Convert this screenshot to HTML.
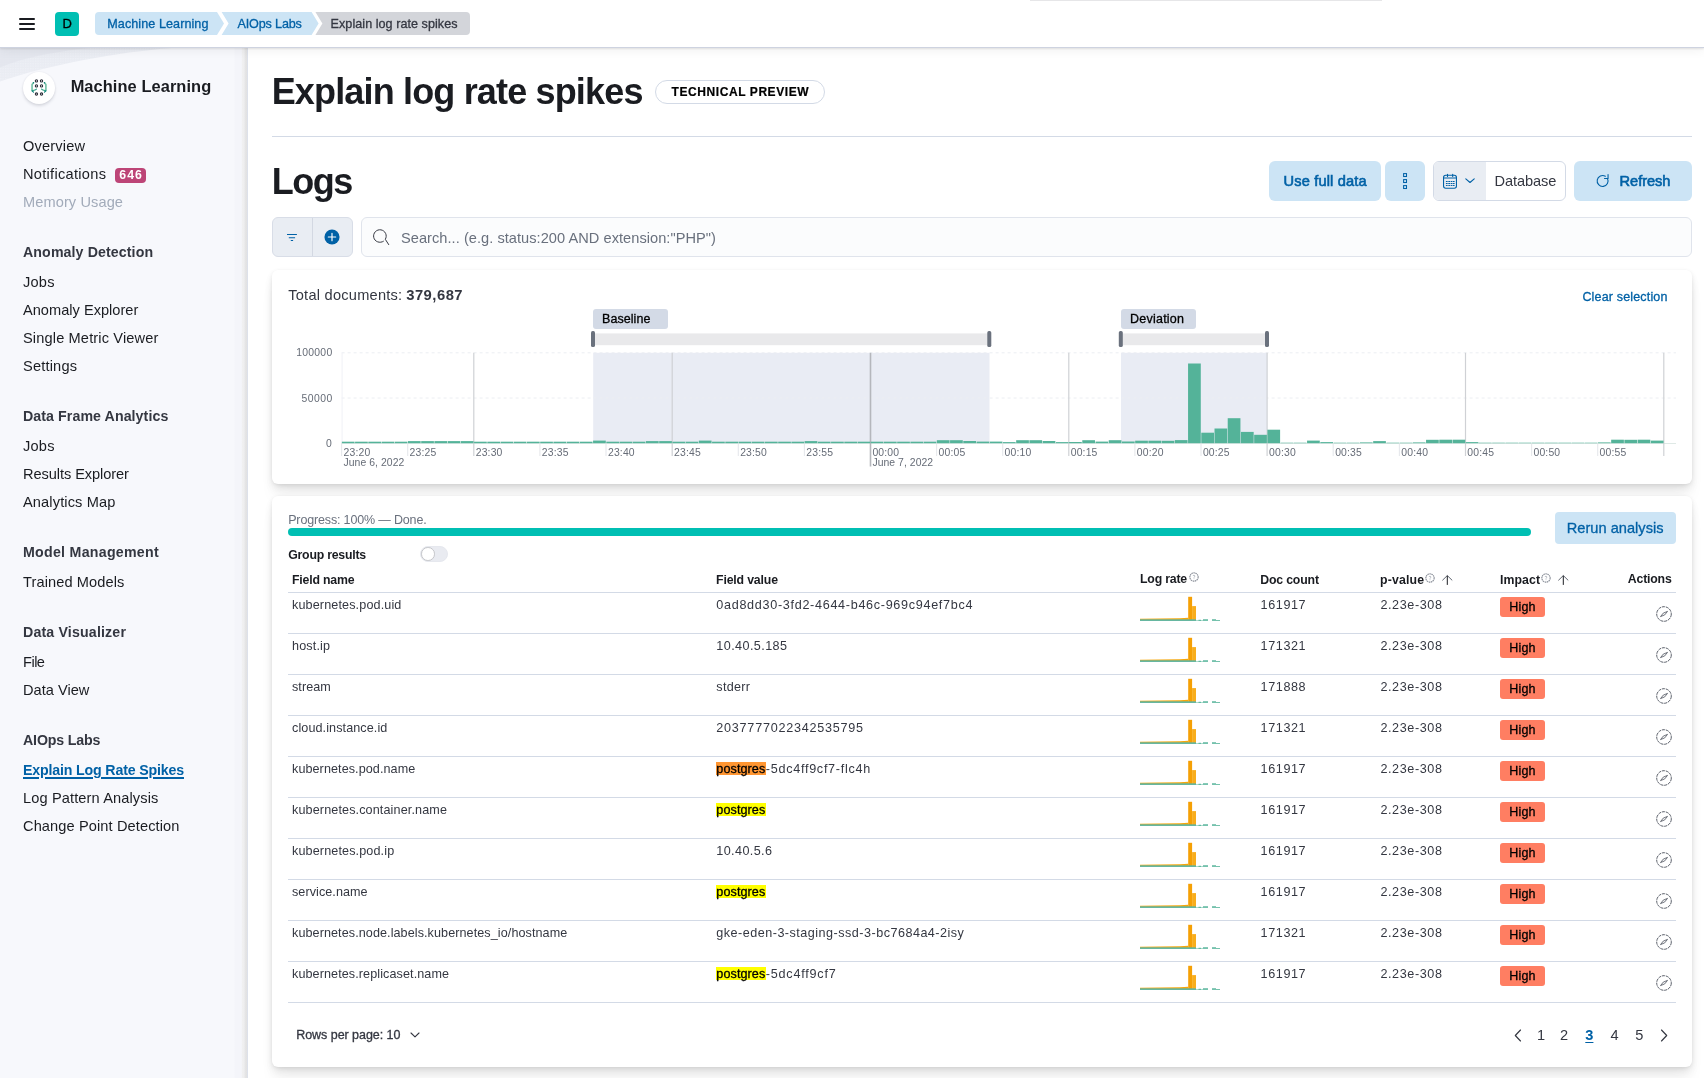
<!DOCTYPE html>
<html lang="en">
<head>
<meta charset="utf-8">
<title>Explain log rate spikes - Machine Learning</title>
<style>
*{box-sizing:border-box;margin:0;padding:0}
html,body{width:1704px;height:1078px;overflow:hidden;background:#fff}
body{font-family:"Liberation Sans",sans-serif;color:#343741;font-size:14px;position:relative;-webkit-font-smoothing:antialiased}
.abs{position:absolute;white-space:nowrap}
svg{position:absolute;overflow:visible}
#hdr{position:absolute;left:0;top:0;width:1704px;height:48px;background:#fff;border-bottom:1px solid #ced3e0;box-shadow:0 1px 2px rgba(0,0,0,.10),0 4px 9px rgba(0,0,0,.045);z-index:10}
#burger i{position:absolute;left:19px;width:16px;height:2px;background:#1a1c21;border-radius:1px}
#avatar{position:absolute;left:55px;top:12px;width:24px;height:24px;border-radius:4px;background:#00bfb3}
#side{position:absolute;left:0;top:48px;width:248px;height:1030px;background:#f7f8fc;overflow:hidden}
#sideshadow{position:absolute;left:234px;top:0;width:14px;height:1030px;background:linear-gradient(to right,rgba(244,245,250,0) 0%,#f4f5fa 8%,#f4f5fa 52%,#f0f0f1 60%,#eeeeef 72%,#e5e5e6 80%,#e2e2e3 92%,#dde1ea 94%,#dde1ea 100%)}
#main{position:absolute;left:248px;top:48px;width:1456px;height:1030px;background:#fff}
.btn{position:absolute;border-radius:6px;background:#cce4f5}
.panel{position:absolute;left:272px;width:1420px;background:#fff;border-radius:6px;box-shadow:0 1px 4px -1px rgba(0,0,0,.10),0 3px 8px -1px rgba(0,0,0,.07),0 6px 12px -1px rgba(0,0,0,.06),0 15px 15px -1px rgba(0,0,0,.04)}
.hl{position:absolute;height:13px}
.rowline{position:absolute;left:288px;width:1388px;height:1px;background:#d3dae6}
.badge{position:absolute;width:45px;height:19.5px;border-radius:3px;background:#ff7e62}
</style>
</head>
<body>
<div id="app" style="position:absolute;left:0;top:0;width:1704px;height:1078px;will-change:transform">
<div id="side">
<svg width="248" height="90" style="left:0;top:0" viewBox="0 0 248 90"><defs><linearGradient id="sw" x1="0" y1="0" x2=".6" y2="1"><stop offset="0" stop-color="#e7eaf1"/><stop offset="1" stop-color="#eceef4"/></linearGradient><pattern id="dots" width="2.500" height="2.500" patternUnits="userSpaceOnUse"><circle cx=".7" cy=".7" r=".55" fill="#f7f8fc" opacity=".75"/></pattern></defs><path d="M0 0H172C118 4 48 17 0 33.500Z" fill="url(#sw)"/><path d="M0 0H172C118 4 48 17 0 33.500Z" fill="url(#dots)"/><path d="M0 0H90C58 3 22 10 0 19.500Z" fill="#e1e4ec" opacity=".75"/></svg>
<div id="sideshadow"></div>
</div>
<div class="abs" style="left:23px;top:72px;width:32px;height:32px;border-radius:50%;background:#fff;box-shadow:0 2px 3px rgba(60,70,90,.16),0 0 2px rgba(60,70,90,.08)"></div>
<svg width="16" height="16" viewBox="0 0 16 16" style="left:31px;top:79px">
<g fill="none" stroke="#2b2d38" stroke-width="1.1"><circle cx="5.440" cy="1.930" r="1.12"/><circle cx="10.520" cy="1.930" r="1.12"/><circle cx="5.440" cy="6.940" r="1.12"/><circle cx="10.520" cy="6.940" r="1.12"/><circle cx="5.440" cy="14.960" r="1.12"/><circle cx="10.520" cy="14.960" r="1.12"/></g>
<g fill="none" stroke-linecap="round" stroke-linejoin="round"><path d="M2.500 3.800L1.050 5.600V11.600" stroke="#6fbea3" stroke-width="1.550"/><path d="M14.460 3.800L14.910 5.600V11.600" stroke="#6fbea3" stroke-width="1.550" transform="translate(-1 0)" opacity="0"/><path d="M13.460 3.800L14.910 5.600V11.600" stroke="#6fbea3" stroke-width="1.550"/>
<path d="M5.440 10.050C4.700 11.050 3.200 11.400 1.700 11.600" stroke="#3aa58d" stroke-width="1.100"/><path d="M10.520 10.050C11.260 11.050 12.760 11.400 14.260 11.600" stroke="#3aa58d" stroke-width="1.100"/>
<path d="M1.100 11.900L2.500 13.100" stroke="#017d73" stroke-width="1.150"/><path d="M14.860 11.900L13.460 13.100" stroke="#017d73" stroke-width="1.150"/>
<path d="M2.400 3.800L2.600 3.700" stroke="#017d73" stroke-width="1.200"/><path d="M13.560 3.800L13.360 3.700" stroke="#017d73" stroke-width="1.200"/></g></svg>
<span class="abs" style="left:70.63px;top:74.30px;font-size:16.4px;line-height:24px;font-weight:700;color:#1a1c21;letter-spacing:0.082px;">Machine Learning</span>
<span class="abs" style="left:23.00px;top:136.00px;font-size:14.6px;line-height:20px;color:#1a1c21;letter-spacing:0.165px;">Overview</span>
<span class="abs" style="left:23.00px;top:164.00px;font-size:14.6px;line-height:20px;color:#1a1c21;letter-spacing:0.290px;">Notifications</span>
<span class="abs" style="left:23.00px;top:192.00px;font-size:14.6px;line-height:20px;color:#a2abba;letter-spacing:0.092px;">Memory Usage</span>
<span class="abs" style="left:23.00px;top:242.00px;font-size:14.2px;line-height:20px;font-weight:700;color:#343741;letter-spacing:0.099px;">Anomaly Detection</span>
<span class="abs" style="left:23.00px;top:272.00px;font-size:14.6px;line-height:20px;color:#1a1c21;letter-spacing:0.220px;">Jobs</span>
<span class="abs" style="left:23.00px;top:300.00px;font-size:14.6px;line-height:20px;color:#1a1c21;letter-spacing:0.012px;">Anomaly Explorer</span>
<span class="abs" style="left:23.00px;top:328.00px;font-size:14.6px;line-height:20px;color:#1a1c21;letter-spacing:0.137px;">Single Metric Viewer</span>
<span class="abs" style="left:23.00px;top:356.00px;font-size:14.6px;line-height:20px;color:#1a1c21;letter-spacing:0.178px;">Settings</span>
<span class="abs" style="left:23.00px;top:406.00px;font-size:14.2px;line-height:20px;font-weight:700;color:#343741;letter-spacing:0.079px;">Data Frame Analytics</span>
<span class="abs" style="left:23.00px;top:436.00px;font-size:14.6px;line-height:20px;color:#1a1c21;letter-spacing:0.220px;">Jobs</span>
<span class="abs" style="left:23.00px;top:464.00px;font-size:14.6px;line-height:20px;color:#1a1c21;letter-spacing:-0.074px;">Results Explorer</span>
<span class="abs" style="left:23.00px;top:492.00px;font-size:14.6px;line-height:20px;color:#1a1c21;letter-spacing:0.127px;">Analytics Map</span>
<span class="abs" style="left:23.00px;top:542.00px;font-size:14.2px;line-height:20px;font-weight:700;color:#343741;letter-spacing:0.269px;">Model Management</span>
<span class="abs" style="left:23.00px;top:572.00px;font-size:14.6px;line-height:20px;color:#1a1c21;letter-spacing:0.094px;">Trained Models</span>
<span class="abs" style="left:23.00px;top:622.00px;font-size:14.2px;line-height:20px;font-weight:700;color:#343741;letter-spacing:0.160px;">Data Visualizer</span>
<span class="abs" style="left:23.00px;top:652.00px;font-size:14.6px;line-height:20px;color:#1a1c21;letter-spacing:-0.509px;">File</span>
<span class="abs" style="left:23.00px;top:680.00px;font-size:14.6px;line-height:20px;color:#1a1c21;letter-spacing:0.015px;">Data View</span>
<span class="abs" style="left:23.00px;top:730.00px;font-size:14.2px;line-height:20px;font-weight:700;color:#343741;letter-spacing:-0.156px;">AIOps Labs</span>
<span class="abs" style="left:23.00px;top:788.00px;font-size:14.6px;line-height:20px;color:#1a1c21;letter-spacing:0.121px;">Log Pattern Analysis</span>
<span class="abs" style="left:23.00px;top:816.00px;font-size:14.6px;line-height:20px;color:#1a1c21;letter-spacing:0.109px;">Change Point Detection</span>
<span class="abs" style="left:23.00px;top:760.00px;font-size:14.2px;line-height:20px;font-weight:700;color:#0061a6;letter-spacing:-0.165px;text-decoration:underline;text-decoration-thickness:1.5px;text-underline-offset:2px;">Explain Log Rate Spikes</span>
<div class="abs" style="left:115px;top:167.5px;width:31px;height:15px;border-radius:4px;background:#bd4577"></div>
<span class="abs" style="left:119.30px;top:167.60px;font-size:12.3px;line-height:15px;font-weight:700;color:#fff;letter-spacing:1.039px;">646</span>
<div id="main"></div>
<div id="hdr">
<div id="burger"><i style="top:17.750px"></i><i style="top:23px"></i><i style="top:28.300px"></i></div>
<div id="avatar"></div>
<span class="abs" style="left:62.40px;top:16.20px;font-size:13px;line-height:16px;color:#000;-webkit-text-stroke:.3px;">D</span>
<svg width="400" height="23" viewBox="0 0 400 23" style="left:95px;top:12px">
<path d="M4 0H122L129 11.5L122 23H4A4 4 0 0 1 0 19V4A4 4 0 0 1 4 0Z" fill="#cce4f5"/>
<path d="M126.600 0H216.600L223.600 11.5L216.600 23H126.600L133.600 11.500Z" fill="#cce4f5"/>
<path d="M220.400 0H371A4 4 0 0 1 375 4V19A4 4 0 0 1 371 23H220.400L227.400 11.500Z" fill="#d3d5da"/>
</svg>
<span class="abs" style="left:107.30px;top:15.60px;font-size:12.6px;line-height:16px;color:#0061a6;letter-spacing:0.069px;-webkit-text-stroke:.3px;">Machine Learning</span>
<span class="abs" style="left:237.50px;top:15.60px;font-size:12.6px;line-height:16px;color:#0061a6;letter-spacing:-0.160px;-webkit-text-stroke:.3px;">AIOps Labs</span>
<span class="abs" style="left:330.60px;top:15.60px;font-size:12.6px;line-height:16px;color:#343741;letter-spacing:0.042px;-webkit-text-stroke:.3px;">Explain log rate spikes</span>
<div class="abs" style="left:1030px;top:0;width:352px;height:1px;background:#e6e6e8"></div>
</div>
<span class="abs" style="left:271.66px;top:72.30px;font-size:36px;line-height:40px;font-weight:700;color:#1a1c21;letter-spacing:-0.835px;">Explain log rate spikes</span>
<div class="abs" style="left:655px;top:80px;width:170px;height:24px;border:1px solid #d3dae6;border-radius:12px;background:#fff"></div>
<span class="abs" style="left:671.60px;top:84.10px;font-size:12px;line-height:16px;font-weight:700;color:#000;letter-spacing:0.576px;-webkit-text-stroke:.2px;">TECHNICAL PREVIEW</span>
<div class="abs" style="left:272px;top:135.9px;width:1420px;height:1px;background:#d3dae6"></div>
<span class="abs" style="left:271.66px;top:161.60px;font-size:36px;line-height:40px;font-weight:700;color:#1a1c21;letter-spacing:-1.420px;">Logs</span>
<div class="btn" style="left:1269px;top:161px;width:112px;height:40px"></div>
<span class="abs" style="left:1283.60px;top:171.00px;font-size:14.6px;line-height:20px;-webkit-text-stroke:.6px;color:#0061a6;letter-spacing:0.154px;">Use full data</span>
<div class="btn" style="left:1385px;top:161px;width:40px;height:40px"></div>
<svg width="5" height="17" viewBox="0 0 5 17" style="left:1403px;top:173px"><g fill="none" stroke="#0061a6" stroke-width="1.05"><rect x=".6" y=".6" width="2.900" height="2.900"/><rect x=".6" y="6.600" width="2.900" height="2.900"/><rect x=".6" y="12.600" width="2.900" height="2.900"/></g></svg>
<div class="abs" style="left:1433px;top:161px;width:133px;height:40px;border:1px solid #d3dae6;border-radius:6px;background:#fff;overflow:hidden"><div style="position:absolute;left:0;top:0;width:52px;height:38px;background:#e9edf3"></div></div>
<svg width="14" height="15" viewBox="0 0 14 15" style="left:1443px;top:174px"><g fill="none" stroke="#0061a6" stroke-width="1.1"><rect x=".55" y="1.250" width="12.900" height="13" rx="2.200"/><path d="M.55 4H13.450" stroke-width="1"/><path d="M4.500 .2V2.500M9.700 .2V2.500" stroke-linecap="round"/></g><g fill="#0061a6"><rect x="2.9" y="7.0" width="1.75" height="1"/><rect x="5.3" y="7.0" width="1.75" height="1"/><rect x="7.65" y="7.0" width="1.75" height="1"/><rect x="9.85" y="7.0" width="1.75" height="1"/><rect x="2.9" y="9.0" width="1.75" height="1"/><rect x="5.3" y="9.0" width="1.75" height="1"/><rect x="7.65" y="9.0" width="1.75" height="1"/><rect x="9.85" y="9.0" width="1.75" height="1"/><rect x="2.9" y="10.95" width="1.75" height="1"/><rect x="5.3" y="10.95" width="1.75" height="1"/><rect x="7.65" y="10.95" width="1.75" height="1"/><rect x="9.85" y="10.95" width="1.75" height="1"/></g></svg>
<svg width="10" height="6" viewBox="0 0 10 6" style="left:1465px;top:178.300px"><path d="M.8 .9L5 4.500L9.200 .9" fill="none" stroke="#0061a6" stroke-width="1.15" stroke-linecap="round" stroke-linejoin="round"/></svg>
<span class="abs" style="left:1494.60px;top:171.00px;font-size:14.6px;line-height:20px;color:#343741;letter-spacing:-0.100px;">Database</span>
<div class="btn" style="left:1574px;top:161px;width:118px;height:40px"></div>
<svg width="14" height="14" viewBox="0 0 14 14" style="left:1596.300px;top:174px"><path d="M11.460 4.530A5.450 5.450 0 1 1 9.330 2.280" fill="none" stroke="#0061a6" stroke-width="1.1" stroke-linecap="round"/><path d="M12.050 .5V4.500H8.500" fill="none" stroke="#0061a6" stroke-width="1.1" stroke-linecap="round" stroke-linejoin="round"/></svg>
<span class="abs" style="left:1619.60px;top:171.00px;font-size:14.6px;line-height:20px;-webkit-text-stroke:.6px;color:#0061a6;letter-spacing:-0.054px;">Refresh</span>
<div class="abs" style="left:272px;top:217px;width:81px;height:40px;border:1px solid #d8dde7;border-radius:6px;background:#e9edf3"><div style="position:absolute;left:38.8px;top:0;width:1px;height:38px;background:#d3d8e2"></div></div>
<svg width="10" height="7" viewBox="0 0 10 7" style="left:286.900px;top:233.800px"><path d="M0 .5H9.900M1.800 3.700H8.100M3.800 6.500H6.100" fill="none" stroke="#0061a6" stroke-width="1.1"/></svg>
<svg width="16" height="16" viewBox="0 0 16 16" style="left:323.900px;top:228.750px"><circle cx="8" cy="8" r="7.550" fill="#0061a6"/><path d="M8 4.300V11.700M4.300 8H11.700" stroke="#fff" stroke-width="1.15" stroke-linecap="round"/></svg>
<div class="abs" style="left:361px;top:217px;width:1331px;height:40px;border:1px solid #e0e4ec;border-radius:6px;background:#fbfcfd"></div>
<svg width="18" height="18" viewBox="0 0 18 18" style="left:372px;top:228px"><path d="M11.400 13.300A6.300 6.300 0 1 1 13.300 11.300L16.700 16.600" fill="none" stroke="#343741" stroke-width="1" stroke-linecap="round" stroke-linejoin="round"/></svg>
<span class="abs" style="left:401.00px;top:227.80px;font-size:14.6px;line-height:20px;color:#69707d;letter-spacing:0.042px;">Search... (e.g. status:200 AND extension:"PHP")</span>
<div class="panel" style="top:270px;height:213.5px"></div>
<span class="abs" style="left:288.20px;top:284.60px;font-size:14.6px;line-height:20px;color:#343741;letter-spacing:0.242px;">Total documents:</span>
<span class="abs" style="left:406.20px;top:284.60px;font-size:14.8px;line-height:20px;font-weight:700;color:#343741;letter-spacing:0.484px;">379,687</span>
<span class="abs" style="left:1582.40px;top:289.10px;font-size:12.5px;line-height:16px;color:#0061a6;letter-spacing:0.166px;-webkit-text-stroke:.3px;">Clear selection</span>
<div class="abs" style="left:593.2px;top:309.2px;width:74.5px;height:19.5px;border-radius:3px;background:#d3dae6"></div>
<span class="abs" style="left:602.00px;top:311.00px;font-size:12.5px;line-height:16px;color:#000;letter-spacing:0.064px;-webkit-text-stroke:.3px;">Baseline</span>
<div class="abs" style="left:1121px;top:309.2px;width:74.5px;height:19.5px;border-radius:3px;background:#d3dae6"></div>
<span class="abs" style="left:1130.00px;top:311.00px;font-size:12.5px;line-height:16px;color:#000;letter-spacing:0.236px;-webkit-text-stroke:.3px;">Deviation</span>
<svg width="1420" height="214" viewBox="272 270 1420 214" style="left:272px;top:270px"><rect x="593.2" y="333.400" width="396.3" height="11.800" fill="#e9e9eb"/><rect x="593.2" y="352.8" width="396.3" height="90.4" fill="#e9ecf4"/><rect x="591.0" y="331.100" width="4" height="15.900" rx="1.6" fill="#6a717d"/><rect x="987.3" y="331.100" width="4" height="15.900" rx="1.6" fill="#6a717d"/><rect x="1121" y="333.400" width="146.2" height="11.800" fill="#e9e9eb"/><rect x="1121" y="352.8" width="146.2" height="90.4" fill="#e9ecf4"/><rect x="1118.8" y="331.100" width="4" height="15.900" rx="1.6" fill="#6a717d"/><rect x="1265.0" y="331.100" width="4" height="15.900" rx="1.6" fill="#6a717d"/><path d="M341.6 352.8H1676" stroke="#eceef2" stroke-width="1" stroke-dasharray="3 3" fill="none"/><path d="M341.6 398H1676" stroke="#eceef2" stroke-width="1" stroke-dasharray="3 3" fill="none"/><path d="M341.6 443.5H1676" stroke="#dfe9e6" stroke-width="1" fill="none"/><path d="M342.1 352.8V443.2" stroke="#f0f1f6" stroke-width="1" fill="none"/><path d="M341.6 443.2V456" stroke="#e6e8ec" stroke-width="1.1" fill="none"/><path d="M407.7 443.2V456" stroke="#e6e8ec" stroke-width="1.1" fill="none"/><path d="M473.8 352.8V456" stroke="#cfd1d5" stroke-width="1.2" fill="none"/><path d="M539.9 443.2V456" stroke="#e6e8ec" stroke-width="1.1" fill="none"/><path d="M606.0 443.2V456" stroke="#e6e8ec" stroke-width="1.1" fill="none"/><path d="M672.2 352.8V456" stroke="#cfd1d5" stroke-width="1.2" fill="none"/><path d="M738.3 443.2V456" stroke="#e6e8ec" stroke-width="1.1" fill="none"/><path d="M804.4 443.2V456" stroke="#e6e8ec" stroke-width="1.1" fill="none"/><path d="M870.5 352.8V466.5" stroke="#b5b7bc" stroke-width="1.6" fill="none"/><path d="M936.6 443.2V456" stroke="#e6e8ec" stroke-width="1.1" fill="none"/><path d="M1002.7 443.2V456" stroke="#e6e8ec" stroke-width="1.1" fill="none"/><path d="M1068.8 352.8V456" stroke="#cfd1d5" stroke-width="1.2" fill="none"/><path d="M1134.9 443.2V456" stroke="#e6e8ec" stroke-width="1.1" fill="none"/><path d="M1201.0 443.2V456" stroke="#e6e8ec" stroke-width="1.1" fill="none"/><path d="M1267.1 352.8V456" stroke="#cfd1d5" stroke-width="1.2" fill="none"/><path d="M1333.2 443.2V456" stroke="#e6e8ec" stroke-width="1.1" fill="none"/><path d="M1399.4 443.2V456" stroke="#e6e8ec" stroke-width="1.1" fill="none"/><path d="M1465.5 352.8V456" stroke="#cfd1d5" stroke-width="1.2" fill="none"/><path d="M1531.6 443.2V456" stroke="#e6e8ec" stroke-width="1.1" fill="none"/><path d="M1597.7 443.2V456" stroke="#e6e8ec" stroke-width="1.1" fill="none"/><path d="M1663.8 352.8V456" stroke="#cfd1d5" stroke-width="1.2" fill="none"/><rect x="341.85" y="441.70" width="12.72" height="1.50" fill="#54b399"/><rect x="355.07" y="441.70" width="12.72" height="1.50" fill="#54b399"/><rect x="368.29" y="441.70" width="12.72" height="1.50" fill="#54b399"/><rect x="381.52" y="441.70" width="12.72" height="1.50" fill="#54b399"/><rect x="394.74" y="441.70" width="12.72" height="1.50" fill="#54b399"/><rect x="407.96" y="441.10" width="12.72" height="2.10" fill="#54b399"/><rect x="421.18" y="441.10" width="12.72" height="2.10" fill="#54b399"/><rect x="434.40" y="441.10" width="12.72" height="2.10" fill="#54b399"/><rect x="447.63" y="441.10" width="12.72" height="2.10" fill="#54b399"/><rect x="460.85" y="441.10" width="12.72" height="2.10" fill="#54b399"/><rect x="474.07" y="441.70" width="12.72" height="1.50" fill="#54b399"/><rect x="487.29" y="441.70" width="12.72" height="1.50" fill="#54b399"/><rect x="500.51" y="441.70" width="12.72" height="1.50" fill="#54b399"/><rect x="513.74" y="441.70" width="12.72" height="1.50" fill="#54b399"/><rect x="526.96" y="441.70" width="12.72" height="1.50" fill="#54b399"/><rect x="540.18" y="441.70" width="12.72" height="1.50" fill="#54b399"/><rect x="553.40" y="441.70" width="12.72" height="1.50" fill="#54b399"/><rect x="566.62" y="441.70" width="12.72" height="1.50" fill="#54b399"/><rect x="579.85" y="441.70" width="12.72" height="1.50" fill="#54b399"/><rect x="593.07" y="440.60" width="12.72" height="2.60" fill="#54b399"/><rect x="606.29" y="441.70" width="12.72" height="1.50" fill="#54b399"/><rect x="619.51" y="441.70" width="12.72" height="1.50" fill="#54b399"/><rect x="632.73" y="441.70" width="12.72" height="1.50" fill="#54b399"/><rect x="645.96" y="441.10" width="12.72" height="2.10" fill="#54b399"/><rect x="659.18" y="441.10" width="12.72" height="2.10" fill="#54b399"/><rect x="672.40" y="441.70" width="12.72" height="1.50" fill="#54b399"/><rect x="685.62" y="441.70" width="12.72" height="1.50" fill="#54b399"/><rect x="698.84" y="440.60" width="12.72" height="2.60" fill="#54b399"/><rect x="712.07" y="441.70" width="12.72" height="1.50" fill="#54b399"/><rect x="725.29" y="441.70" width="12.72" height="1.50" fill="#54b399"/><rect x="738.51" y="441.70" width="12.72" height="1.50" fill="#54b399"/><rect x="751.73" y="441.70" width="12.72" height="1.50" fill="#54b399"/><rect x="764.95" y="441.70" width="12.72" height="1.50" fill="#54b399"/><rect x="778.18" y="441.70" width="12.72" height="1.50" fill="#54b399"/><rect x="791.40" y="441.70" width="12.72" height="1.50" fill="#54b399"/><rect x="804.62" y="441.10" width="12.72" height="2.10" fill="#54b399"/><rect x="817.84" y="441.70" width="12.72" height="1.50" fill="#54b399"/><rect x="831.06" y="441.70" width="12.72" height="1.50" fill="#54b399"/><rect x="844.29" y="441.70" width="12.72" height="1.50" fill="#54b399"/><rect x="857.51" y="441.70" width="12.72" height="1.50" fill="#54b399"/><rect x="870.73" y="441.70" width="12.72" height="1.50" fill="#54b399"/><rect x="883.95" y="441.70" width="12.72" height="1.50" fill="#54b399"/><rect x="897.17" y="441.70" width="12.72" height="1.50" fill="#54b399"/><rect x="910.40" y="441.70" width="12.72" height="1.50" fill="#54b399"/><rect x="923.62" y="441.70" width="12.72" height="1.50" fill="#54b399"/><rect x="936.84" y="440.20" width="12.72" height="3.00" fill="#54b399"/><rect x="950.06" y="440.20" width="12.72" height="3.00" fill="#54b399"/><rect x="963.28" y="441.00" width="12.72" height="2.20" fill="#54b399"/><rect x="976.51" y="441.60" width="12.72" height="1.60" fill="#54b399"/><rect x="989.73" y="441.60" width="12.72" height="1.60" fill="#54b399"/><rect x="1002.95" y="442.10" width="12.72" height="1.10" fill="#54b399"/><rect x="1016.17" y="440.20" width="12.72" height="3.00" fill="#54b399"/><rect x="1029.39" y="440.20" width="12.72" height="3.00" fill="#54b399"/><rect x="1042.62" y="441.00" width="12.72" height="2.20" fill="#54b399"/><rect x="1055.84" y="442.10" width="12.72" height="1.10" fill="#54b399"/><rect x="1069.06" y="442.00" width="12.72" height="1.20" fill="#54b399"/><rect x="1082.28" y="440.20" width="12.72" height="3.00" fill="#54b399"/><rect x="1095.50" y="441.60" width="12.72" height="1.60" fill="#54b399"/><rect x="1108.73" y="440.20" width="12.72" height="3.00" fill="#54b399"/><rect x="1121.95" y="441.50" width="12.72" height="1.70" fill="#54b399"/><rect x="1135.17" y="440.70" width="12.72" height="2.50" fill="#54b399"/><rect x="1148.39" y="440.70" width="12.72" height="2.50" fill="#54b399"/><rect x="1161.61" y="440.80" width="12.72" height="2.40" fill="#54b399"/><rect x="1174.84" y="440.10" width="12.72" height="3.10" fill="#54b399"/><rect x="1188.06" y="363.50" width="12.72" height="79.70" fill="#54b399"/><rect x="1201.28" y="432.70" width="12.72" height="10.50" fill="#54b399"/><rect x="1214.50" y="428.50" width="12.72" height="14.70" fill="#54b399"/><rect x="1227.72" y="418.20" width="12.72" height="25.00" fill="#54b399"/><rect x="1240.95" y="431.90" width="12.72" height="11.30" fill="#54b399"/><rect x="1254.17" y="434.80" width="12.72" height="8.40" fill="#54b399"/><rect x="1267.39" y="429.70" width="12.72" height="13.50" fill="#54b399"/><rect x="1280.61" y="442.70" width="12.72" height="0.50" fill="#54b399"/><rect x="1293.83" y="442.70" width="12.72" height="0.50" fill="#54b399"/><rect x="1307.06" y="440.60" width="12.72" height="2.60" fill="#54b399"/><rect x="1320.28" y="442.10" width="12.72" height="1.10" fill="#54b399"/><rect x="1333.50" y="442.70" width="12.72" height="0.50" fill="#54b399"/><rect x="1346.72" y="442.70" width="12.72" height="0.50" fill="#54b399"/><rect x="1359.94" y="442.40" width="12.72" height="0.80" fill="#54b399"/><rect x="1373.17" y="441.10" width="12.72" height="2.10" fill="#54b399"/><rect x="1386.39" y="442.70" width="12.72" height="0.50" fill="#54b399"/><rect x="1399.61" y="442.70" width="12.72" height="0.50" fill="#54b399"/><rect x="1412.83" y="442.40" width="12.72" height="0.80" fill="#54b399"/><rect x="1426.05" y="439.80" width="12.72" height="3.40" fill="#54b399"/><rect x="1439.28" y="439.70" width="12.72" height="3.50" fill="#54b399"/><rect x="1452.50" y="439.70" width="12.72" height="3.50" fill="#54b399"/><rect x="1465.72" y="442.10" width="12.72" height="1.10" fill="#54b399"/><rect x="1478.94" y="442.70" width="12.72" height="0.50" fill="#54b399"/><rect x="1492.16" y="442.70" width="12.72" height="0.50" fill="#54b399"/><rect x="1505.39" y="442.70" width="12.72" height="0.50" fill="#54b399"/><rect x="1518.61" y="442.70" width="12.72" height="0.50" fill="#54b399"/><rect x="1531.83" y="442.70" width="12.72" height="0.50" fill="#54b399"/><rect x="1545.05" y="442.70" width="12.72" height="0.50" fill="#54b399"/><rect x="1558.27" y="442.70" width="12.72" height="0.50" fill="#54b399"/><rect x="1571.50" y="442.70" width="12.72" height="0.50" fill="#54b399"/><rect x="1584.72" y="442.70" width="12.72" height="0.50" fill="#54b399"/><rect x="1597.94" y="442.40" width="12.72" height="0.80" fill="#54b399"/><rect x="1611.16" y="439.70" width="12.72" height="3.50" fill="#54b399"/><rect x="1624.38" y="439.80" width="12.72" height="3.40" fill="#54b399"/><rect x="1637.61" y="439.70" width="12.72" height="3.50" fill="#54b399"/><rect x="1650.83" y="440.60" width="12.72" height="2.60" fill="#54b399"/></svg>
<span class="abs" style="left:296.20px;top:346.10px;font-size:10.4px;line-height:13px;color:#666c77;letter-spacing:0.259px;">100000</span>
<span class="abs" style="left:301.60px;top:391.70px;font-size:10.4px;line-height:13px;color:#666c77;letter-spacing:0.420px;">50000</span>
<span class="abs" style="left:326.00px;top:436.90px;font-size:10.4px;line-height:13px;color:#666c77;">0</span>
<span class="abs" style="left:343.50px;top:445.50px;font-size:10.4px;line-height:13px;color:#666c77;letter-spacing:0.169px;">23:20</span>
<span class="abs" style="left:409.61px;top:445.50px;font-size:10.4px;line-height:13px;color:#666c77;letter-spacing:0.169px;">23:25</span>
<span class="abs" style="left:475.72px;top:445.50px;font-size:10.4px;line-height:13px;color:#666c77;letter-spacing:0.169px;">23:30</span>
<span class="abs" style="left:541.83px;top:445.50px;font-size:10.4px;line-height:13px;color:#666c77;letter-spacing:0.169px;">23:35</span>
<span class="abs" style="left:607.94px;top:445.50px;font-size:10.4px;line-height:13px;color:#666c77;letter-spacing:0.169px;">23:40</span>
<span class="abs" style="left:674.05px;top:445.50px;font-size:10.4px;line-height:13px;color:#666c77;letter-spacing:0.169px;">23:45</span>
<span class="abs" style="left:740.16px;top:445.50px;font-size:10.4px;line-height:13px;color:#666c77;letter-spacing:0.169px;">23:50</span>
<span class="abs" style="left:806.27px;top:445.50px;font-size:10.4px;line-height:13px;color:#666c77;letter-spacing:0.169px;">23:55</span>
<span class="abs" style="left:872.38px;top:445.50px;font-size:10.4px;line-height:13px;color:#666c77;letter-spacing:0.169px;">00:00</span>
<span class="abs" style="left:938.49px;top:445.50px;font-size:10.4px;line-height:13px;color:#666c77;letter-spacing:0.169px;">00:05</span>
<span class="abs" style="left:1004.60px;top:445.50px;font-size:10.4px;line-height:13px;color:#666c77;letter-spacing:0.169px;">00:10</span>
<span class="abs" style="left:1070.71px;top:445.50px;font-size:10.4px;line-height:13px;color:#666c77;letter-spacing:0.169px;">00:15</span>
<span class="abs" style="left:1136.82px;top:445.50px;font-size:10.4px;line-height:13px;color:#666c77;letter-spacing:0.169px;">00:20</span>
<span class="abs" style="left:1202.93px;top:445.50px;font-size:10.4px;line-height:13px;color:#666c77;letter-spacing:0.169px;">00:25</span>
<span class="abs" style="left:1269.04px;top:445.50px;font-size:10.4px;line-height:13px;color:#666c77;letter-spacing:0.169px;">00:30</span>
<span class="abs" style="left:1335.15px;top:445.50px;font-size:10.4px;line-height:13px;color:#666c77;letter-spacing:0.169px;">00:35</span>
<span class="abs" style="left:1401.26px;top:445.50px;font-size:10.4px;line-height:13px;color:#666c77;letter-spacing:0.169px;">00:40</span>
<span class="abs" style="left:1467.37px;top:445.50px;font-size:10.4px;line-height:13px;color:#666c77;letter-spacing:0.169px;">00:45</span>
<span class="abs" style="left:1533.48px;top:445.50px;font-size:10.4px;line-height:13px;color:#666c77;letter-spacing:0.169px;">00:50</span>
<span class="abs" style="left:1599.59px;top:445.50px;font-size:10.4px;line-height:13px;color:#666c77;letter-spacing:0.169px;">00:55</span>
<span class="abs" style="left:343.50px;top:455.90px;font-size:10.4px;line-height:13px;color:#666c77;letter-spacing:0.060px;">June 6, 2022</span>
<span class="abs" style="left:872.38px;top:455.90px;font-size:10.4px;line-height:13px;color:#666c77;letter-spacing:0.060px;">June 7, 2022</span>
<div class="panel" style="top:496px;height:571px"></div>
<span class="abs" style="left:288.20px;top:511.70px;font-size:12.5px;line-height:16px;color:#69707d;letter-spacing:-0.154px;">Progress: 100% — Done.</span>
<div class="abs" style="left:288px;top:528px;width:1243px;height:7.600px;border-radius:4px;background:#00bfb3"></div>
<div class="btn" style="left:1555px;top:512px;width:121px;height:32px;border-radius:4px"></div>
<span class="abs" style="left:1566.80px;top:518.00px;font-size:14.6px;line-height:20px;color:#0061a6;letter-spacing:0.018px;-webkit-text-stroke:.3px;">Rerun analysis</span>
<span class="abs" style="left:288.20px;top:546.70px;font-size:12.3px;line-height:16px;font-weight:700;color:#1a1c21;letter-spacing:-0.221px;">Group results</span>
<div class="abs" style="left:420.400px;top:546.200px;width:27.600px;height:15.600px;border-radius:8px;background:#e9ebf1;border:1px solid #e6e8ee"><div style="position:absolute;left:0;top:0;width:13.600px;height:13.600px;border-radius:50%;background:#fff;border:1px solid #c4c5c9"></div></div>
<span class="abs" style="left:292.00px;top:571.70px;font-size:12.3px;line-height:16px;font-weight:700;color:#1a1c21;letter-spacing:-0.195px;">Field name</span>
<span class="abs" style="left:716.10px;top:571.70px;font-size:12.3px;line-height:16px;font-weight:700;color:#1a1c21;letter-spacing:-0.167px;">Field value</span>
<span class="abs" style="left:1140.00px;top:570.80px;font-size:12.3px;line-height:16px;font-weight:700;color:#1a1c21;letter-spacing:-0.189px;">Log rate</span>
<svg width="10" height="10" viewBox="0 0 10 10" style="left:1188.80px;top:571.80px"><circle cx="5" cy="5" r="4.150" fill="none" stroke="#8a8f99" stroke-width="1.15" stroke-dasharray="1.500 .55"/><path d="M4 4C4.100 3 5.900 3 5.900 4.100C5.900 4.800 5 4.900 5 5.700" fill="none" stroke="#9a9fa9" stroke-width=".7"/><circle cx="5" cy="6.800" r=".45" fill="#9a9fa9"/></svg>
<span class="abs" style="left:1260.20px;top:571.70px;font-size:12.3px;line-height:16px;font-weight:700;color:#1a1c21;letter-spacing:-0.166px;">Doc count</span>
<span class="abs" style="left:1380.00px;top:571.70px;font-size:12.3px;line-height:16px;font-weight:700;color:#1a1c21;letter-spacing:0.156px;">p-value</span>
<svg width="10" height="10" viewBox="0 0 10 10" style="left:1424.80px;top:572.90px"><circle cx="5" cy="5" r="4.150" fill="none" stroke="#8a8f99" stroke-width="1.15" stroke-dasharray="1.500 .55"/><path d="M4 4C4.100 3 5.900 3 5.900 4.100C5.900 4.800 5 4.900 5 5.700" fill="none" stroke="#9a9fa9" stroke-width=".7"/><circle cx="5" cy="6.800" r=".45" fill="#9a9fa9"/></svg>
<svg width="11" height="10" viewBox="0 0 10.600 10" style="left:1442.20px;top:574.85px;width:10.600px"><path d="M.35 5.400L5.300 .55L10.250 5.400" fill="none" stroke="#5f6570" stroke-width="1" stroke-linejoin="miter"/><path d="M5.300 9.900V.7" fill="none" stroke="#1a1c21" stroke-width="1"/></svg>
<span class="abs" style="left:1499.90px;top:571.70px;font-size:12.3px;line-height:16px;font-weight:700;color:#1a1c21;letter-spacing:0.091px;">Impact</span>
<svg width="10" height="10" viewBox="0 0 10 10" style="left:1540.80px;top:572.90px"><circle cx="5" cy="5" r="4.150" fill="none" stroke="#8a8f99" stroke-width="1.15" stroke-dasharray="1.500 .55"/><path d="M4 4C4.100 3 5.900 3 5.900 4.100C5.900 4.800 5 4.900 5 5.700" fill="none" stroke="#9a9fa9" stroke-width=".7"/><circle cx="5" cy="6.800" r=".45" fill="#9a9fa9"/></svg>
<svg width="11" height="10" viewBox="0 0 10.600 10" style="left:1558.20px;top:574.85px;width:10.600px"><path d="M.35 5.400L5.300 .55L10.250 5.400" fill="none" stroke="#5f6570" stroke-width="1" stroke-linejoin="miter"/><path d="M5.300 9.900V.7" fill="none" stroke="#1a1c21" stroke-width="1"/></svg>
<span class="abs" style="left:1627.80px;top:570.80px;font-size:12.3px;line-height:16px;font-weight:700;color:#1a1c21;letter-spacing:-0.184px;">Actions</span>
<div class="rowline" style="top:592px"></div>
<span class="abs" style="left:292.00px;top:596.70px;font-size:12.6px;line-height:16px;color:#343741;letter-spacing:0.131px;">kubernetes.pod.uid</span>
<span class="abs" style="left:716.30px;top:596.70px;font-size:12.6px;line-height:16px;color:#343741;letter-spacing:0.697px;">0ad8dd30-3fd2-4644-b46c-969c94ef7bc4</span>
<svg width="80" height="26" viewBox="0 0 80 26" style="left:1140px;top:596.2px"><path d="M0 23.700V22.800L20 22.600L40 22.200L48.200 21.800V23.700Z" fill="#f5a70b"/><rect x="48.200" y=".8" width="3.900" height="23" fill="#f5a005"/><rect x="52.100" y="10.100" width="3.900" height="13.700" fill="#f8ad1c"/><rect x="0" y="23.400" width="56" height="1.450" fill="#4dab91"/><rect x="56" y="24.200" width="7" height=".6" fill="#54b399" opacity=".8"/><rect x="58.500" y="23.800" width="2.500" height="1" fill="#54b399"/><rect x="63" y="23.300" width="5" height="1.500" fill="#54b399"/><rect x="72" y="23.300" width="4" height="1.500" fill="#54b399"/><rect x="76" y="24" width="4" height=".8" fill="#54b399"/></svg>
<span class="abs" style="left:1260.60px;top:596.70px;font-size:12.6px;line-height:16px;color:#343741;letter-spacing:0.591px;">161917</span>
<span class="abs" style="left:1380.40px;top:596.70px;font-size:12.6px;line-height:16px;color:#343741;letter-spacing:0.606px;">2.23e-308</span>
<div class="badge" style="left:1500px;top:597px"></div>
<span class="abs" style="left:1509.20px;top:599.00px;font-size:12.5px;line-height:16px;color:#000;letter-spacing:0.197px;-webkit-text-stroke:.3px;">High</span>
<svg width="16" height="16" viewBox="0 0 16 16" style="left:1655.6px;top:606.0px"><circle cx="8" cy="8" r="7.300" fill="none" stroke="#4a4f5a" stroke-width=".9" stroke-dasharray="3.200 .8"/><path d="M11.500 5.400L8.700 8.900L4.500 10.600L7.300 7.100Z" fill="none" stroke="#4a4f5a" stroke-width=".8" stroke-linejoin="round"/></svg>
<div class="rowline" style="top:633px"></div>
<span class="abs" style="left:292.00px;top:637.70px;font-size:12.6px;line-height:16px;color:#343741;letter-spacing:0.146px;">host.ip</span>
<span class="abs" style="left:716.30px;top:637.70px;font-size:12.6px;line-height:16px;color:#343741;letter-spacing:0.414px;">10.40.5.185</span>
<svg width="80" height="26" viewBox="0 0 80 26" style="left:1140px;top:637.2px"><path d="M0 23.700V22.800L20 22.600L40 22.200L48.200 21.800V23.700Z" fill="#f5a70b"/><rect x="48.200" y=".8" width="3.900" height="23" fill="#f5a005"/><rect x="52.100" y="10.100" width="3.900" height="13.700" fill="#f8ad1c"/><rect x="0" y="23.400" width="56" height="1.450" fill="#4dab91"/><rect x="56" y="24.200" width="7" height=".6" fill="#54b399" opacity=".8"/><rect x="58.500" y="23.800" width="2.500" height="1" fill="#54b399"/><rect x="63" y="23.300" width="5" height="1.500" fill="#54b399"/><rect x="72" y="23.300" width="4" height="1.500" fill="#54b399"/><rect x="76" y="24" width="4" height=".8" fill="#54b399"/></svg>
<span class="abs" style="left:1260.60px;top:637.70px;font-size:12.6px;line-height:16px;color:#343741;letter-spacing:0.591px;">171321</span>
<span class="abs" style="left:1380.40px;top:637.70px;font-size:12.6px;line-height:16px;color:#343741;letter-spacing:0.606px;">2.23e-308</span>
<div class="badge" style="left:1500px;top:638px"></div>
<span class="abs" style="left:1509.20px;top:640.00px;font-size:12.5px;line-height:16px;color:#000;letter-spacing:0.197px;-webkit-text-stroke:.3px;">High</span>
<svg width="16" height="16" viewBox="0 0 16 16" style="left:1655.6px;top:647.0px"><circle cx="8" cy="8" r="7.300" fill="none" stroke="#4a4f5a" stroke-width=".9" stroke-dasharray="3.200 .8"/><path d="M11.500 5.400L8.700 8.900L4.500 10.600L7.300 7.100Z" fill="none" stroke="#4a4f5a" stroke-width=".8" stroke-linejoin="round"/></svg>
<div class="rowline" style="top:674px"></div>
<span class="abs" style="left:292.00px;top:678.70px;font-size:12.6px;line-height:16px;color:#343741;letter-spacing:0.058px;">stream</span>
<span class="abs" style="left:716.30px;top:678.70px;font-size:12.6px;line-height:16px;color:#343741;letter-spacing:0.298px;">stderr</span>
<svg width="80" height="26" viewBox="0 0 80 26" style="left:1140px;top:678.2px"><path d="M0 23.700V22.800L20 22.600L40 22.200L48.200 21.800V23.700Z" fill="#f5a70b"/><rect x="48.200" y=".8" width="3.900" height="23" fill="#f5a005"/><rect x="52.100" y="10.100" width="3.900" height="13.700" fill="#f8ad1c"/><rect x="0" y="23.400" width="56" height="1.450" fill="#4dab91"/><rect x="56" y="24.200" width="7" height=".6" fill="#54b399" opacity=".8"/><rect x="58.500" y="23.800" width="2.500" height="1" fill="#54b399"/><rect x="63" y="23.300" width="5" height="1.500" fill="#54b399"/><rect x="72" y="23.300" width="4" height="1.500" fill="#54b399"/><rect x="76" y="24" width="4" height=".8" fill="#54b399"/></svg>
<span class="abs" style="left:1260.60px;top:678.70px;font-size:12.6px;line-height:16px;color:#343741;letter-spacing:0.591px;">171888</span>
<span class="abs" style="left:1380.40px;top:678.70px;font-size:12.6px;line-height:16px;color:#343741;letter-spacing:0.606px;">2.23e-308</span>
<div class="badge" style="left:1500px;top:679px"></div>
<span class="abs" style="left:1509.20px;top:681.00px;font-size:12.5px;line-height:16px;color:#000;letter-spacing:0.197px;-webkit-text-stroke:.3px;">High</span>
<svg width="16" height="16" viewBox="0 0 16 16" style="left:1655.6px;top:688.0px"><circle cx="8" cy="8" r="7.300" fill="none" stroke="#4a4f5a" stroke-width=".9" stroke-dasharray="3.200 .8"/><path d="M11.500 5.400L8.700 8.900L4.500 10.600L7.300 7.100Z" fill="none" stroke="#4a4f5a" stroke-width=".8" stroke-linejoin="round"/></svg>
<div class="rowline" style="top:715px"></div>
<span class="abs" style="left:292.00px;top:719.70px;font-size:12.6px;line-height:16px;color:#343741;letter-spacing:0.096px;">cloud.instance.id</span>
<span class="abs" style="left:716.30px;top:719.70px;font-size:12.6px;line-height:16px;color:#343741;letter-spacing:0.764px;">2037777022342535795</span>
<svg width="80" height="26" viewBox="0 0 80 26" style="left:1140px;top:719.2px"><path d="M0 23.700V22.800L20 22.600L40 22.200L48.200 21.800V23.700Z" fill="#f5a70b"/><rect x="48.200" y=".8" width="3.900" height="23" fill="#f5a005"/><rect x="52.100" y="10.100" width="3.900" height="13.700" fill="#f8ad1c"/><rect x="0" y="23.400" width="56" height="1.450" fill="#4dab91"/><rect x="56" y="24.200" width="7" height=".6" fill="#54b399" opacity=".8"/><rect x="58.500" y="23.800" width="2.500" height="1" fill="#54b399"/><rect x="63" y="23.300" width="5" height="1.500" fill="#54b399"/><rect x="72" y="23.300" width="4" height="1.500" fill="#54b399"/><rect x="76" y="24" width="4" height=".8" fill="#54b399"/></svg>
<span class="abs" style="left:1260.60px;top:719.70px;font-size:12.6px;line-height:16px;color:#343741;letter-spacing:0.591px;">171321</span>
<span class="abs" style="left:1380.40px;top:719.70px;font-size:12.6px;line-height:16px;color:#343741;letter-spacing:0.606px;">2.23e-308</span>
<div class="badge" style="left:1500px;top:720px"></div>
<span class="abs" style="left:1509.20px;top:722.00px;font-size:12.5px;line-height:16px;color:#000;letter-spacing:0.197px;-webkit-text-stroke:.3px;">High</span>
<svg width="16" height="16" viewBox="0 0 16 16" style="left:1655.6px;top:729.0px"><circle cx="8" cy="8" r="7.300" fill="none" stroke="#4a4f5a" stroke-width=".9" stroke-dasharray="3.200 .8"/><path d="M11.500 5.400L8.700 8.900L4.500 10.600L7.300 7.100Z" fill="none" stroke="#4a4f5a" stroke-width=".8" stroke-linejoin="round"/></svg>
<div class="rowline" style="top:756px"></div>
<span class="abs" style="left:292.00px;top:760.70px;font-size:12.6px;line-height:16px;color:#343741;letter-spacing:0.079px;">kubernetes.pod.name</span>
<div class="hl" style="left:716px;top:762px;width:49.600px;height:12.800px;background:#ff9632"></div>
<span class="abs" style="left:716.30px;top:760.70px;font-size:12.6px;line-height:16px;color:#000;letter-spacing:0.096px;-webkit-text-stroke:.3px;">postgres</span>
<span class="abs" style="left:765.80px;top:760.70px;font-size:12.6px;line-height:16px;color:#343741;letter-spacing:0.724px;">-5dc4ff9cf7-flc4h</span>
<svg width="80" height="26" viewBox="0 0 80 26" style="left:1140px;top:760.2px"><path d="M0 23.700V22.800L20 22.600L40 22.200L48.200 21.800V23.700Z" fill="#f5a70b"/><rect x="48.200" y=".8" width="3.900" height="23" fill="#f5a005"/><rect x="52.100" y="10.100" width="3.900" height="13.700" fill="#f8ad1c"/><rect x="0" y="23.400" width="56" height="1.450" fill="#4dab91"/><rect x="56" y="24.200" width="7" height=".6" fill="#54b399" opacity=".8"/><rect x="58.500" y="23.800" width="2.500" height="1" fill="#54b399"/><rect x="63" y="23.300" width="5" height="1.500" fill="#54b399"/><rect x="72" y="23.300" width="4" height="1.500" fill="#54b399"/><rect x="76" y="24" width="4" height=".8" fill="#54b399"/></svg>
<span class="abs" style="left:1260.60px;top:760.70px;font-size:12.6px;line-height:16px;color:#343741;letter-spacing:0.591px;">161917</span>
<span class="abs" style="left:1380.40px;top:760.70px;font-size:12.6px;line-height:16px;color:#343741;letter-spacing:0.606px;">2.23e-308</span>
<div class="badge" style="left:1500px;top:761px"></div>
<span class="abs" style="left:1509.20px;top:763.00px;font-size:12.5px;line-height:16px;color:#000;letter-spacing:0.197px;-webkit-text-stroke:.3px;">High</span>
<svg width="16" height="16" viewBox="0 0 16 16" style="left:1655.6px;top:770.0px"><circle cx="8" cy="8" r="7.300" fill="none" stroke="#4a4f5a" stroke-width=".9" stroke-dasharray="3.200 .8"/><path d="M11.500 5.400L8.700 8.900L4.500 10.600L7.300 7.100Z" fill="none" stroke="#4a4f5a" stroke-width=".8" stroke-linejoin="round"/></svg>
<div class="rowline" style="top:797px"></div>
<span class="abs" style="left:292.00px;top:801.70px;font-size:12.6px;line-height:16px;color:#343741;letter-spacing:0.125px;">kubernetes.container.name</span>
<div class="hl" style="left:716px;top:803px;width:49.600px;height:12.800px;background:#ffff00"></div>
<span class="abs" style="left:716.30px;top:801.70px;font-size:12.6px;line-height:16px;color:#000;letter-spacing:0.096px;-webkit-text-stroke:.3px;">postgres</span>
<svg width="80" height="26" viewBox="0 0 80 26" style="left:1140px;top:801.2px"><path d="M0 23.700V22.800L20 22.600L40 22.200L48.200 21.800V23.700Z" fill="#f5a70b"/><rect x="48.200" y=".8" width="3.900" height="23" fill="#f5a005"/><rect x="52.100" y="10.100" width="3.900" height="13.700" fill="#f8ad1c"/><rect x="0" y="23.400" width="56" height="1.450" fill="#4dab91"/><rect x="56" y="24.200" width="7" height=".6" fill="#54b399" opacity=".8"/><rect x="58.500" y="23.800" width="2.500" height="1" fill="#54b399"/><rect x="63" y="23.300" width="5" height="1.500" fill="#54b399"/><rect x="72" y="23.300" width="4" height="1.500" fill="#54b399"/><rect x="76" y="24" width="4" height=".8" fill="#54b399"/></svg>
<span class="abs" style="left:1260.60px;top:801.70px;font-size:12.6px;line-height:16px;color:#343741;letter-spacing:0.591px;">161917</span>
<span class="abs" style="left:1380.40px;top:801.70px;font-size:12.6px;line-height:16px;color:#343741;letter-spacing:0.606px;">2.23e-308</span>
<div class="badge" style="left:1500px;top:802px"></div>
<span class="abs" style="left:1509.20px;top:804.00px;font-size:12.5px;line-height:16px;color:#000;letter-spacing:0.197px;-webkit-text-stroke:.3px;">High</span>
<svg width="16" height="16" viewBox="0 0 16 16" style="left:1655.6px;top:811.0px"><circle cx="8" cy="8" r="7.300" fill="none" stroke="#4a4f5a" stroke-width=".9" stroke-dasharray="3.200 .8"/><path d="M11.500 5.400L8.700 8.900L4.500 10.600L7.300 7.100Z" fill="none" stroke="#4a4f5a" stroke-width=".8" stroke-linejoin="round"/></svg>
<div class="rowline" style="top:838px"></div>
<span class="abs" style="left:292.00px;top:842.70px;font-size:12.6px;line-height:16px;color:#343741;letter-spacing:0.127px;">kubernetes.pod.ip</span>
<span class="abs" style="left:716.30px;top:842.70px;font-size:12.6px;line-height:16px;color:#343741;letter-spacing:0.394px;">10.40.5.6</span>
<svg width="80" height="26" viewBox="0 0 80 26" style="left:1140px;top:842.2px"><path d="M0 23.700V22.800L20 22.600L40 22.200L48.200 21.800V23.700Z" fill="#f5a70b"/><rect x="48.200" y=".8" width="3.900" height="23" fill="#f5a005"/><rect x="52.100" y="10.100" width="3.900" height="13.700" fill="#f8ad1c"/><rect x="0" y="23.400" width="56" height="1.450" fill="#4dab91"/><rect x="56" y="24.200" width="7" height=".6" fill="#54b399" opacity=".8"/><rect x="58.500" y="23.800" width="2.500" height="1" fill="#54b399"/><rect x="63" y="23.300" width="5" height="1.500" fill="#54b399"/><rect x="72" y="23.300" width="4" height="1.500" fill="#54b399"/><rect x="76" y="24" width="4" height=".8" fill="#54b399"/></svg>
<span class="abs" style="left:1260.60px;top:842.70px;font-size:12.6px;line-height:16px;color:#343741;letter-spacing:0.591px;">161917</span>
<span class="abs" style="left:1380.40px;top:842.70px;font-size:12.6px;line-height:16px;color:#343741;letter-spacing:0.606px;">2.23e-308</span>
<div class="badge" style="left:1500px;top:843px"></div>
<span class="abs" style="left:1509.20px;top:845.00px;font-size:12.5px;line-height:16px;color:#000;letter-spacing:0.197px;-webkit-text-stroke:.3px;">High</span>
<svg width="16" height="16" viewBox="0 0 16 16" style="left:1655.6px;top:852.0px"><circle cx="8" cy="8" r="7.300" fill="none" stroke="#4a4f5a" stroke-width=".9" stroke-dasharray="3.200 .8"/><path d="M11.500 5.400L8.700 8.900L4.500 10.600L7.300 7.100Z" fill="none" stroke="#4a4f5a" stroke-width=".8" stroke-linejoin="round"/></svg>
<div class="rowline" style="top:879px"></div>
<span class="abs" style="left:292.00px;top:883.70px;font-size:12.6px;line-height:16px;color:#343741;letter-spacing:0.061px;">service.name</span>
<div class="hl" style="left:716px;top:885px;width:49.600px;height:12.800px;background:#ffff00"></div>
<span class="abs" style="left:716.30px;top:883.70px;font-size:12.6px;line-height:16px;color:#000;letter-spacing:0.096px;-webkit-text-stroke:.3px;">postgres</span>
<svg width="80" height="26" viewBox="0 0 80 26" style="left:1140px;top:883.2px"><path d="M0 23.700V22.800L20 22.600L40 22.200L48.200 21.800V23.700Z" fill="#f5a70b"/><rect x="48.200" y=".8" width="3.900" height="23" fill="#f5a005"/><rect x="52.100" y="10.100" width="3.900" height="13.700" fill="#f8ad1c"/><rect x="0" y="23.400" width="56" height="1.450" fill="#4dab91"/><rect x="56" y="24.200" width="7" height=".6" fill="#54b399" opacity=".8"/><rect x="58.500" y="23.800" width="2.500" height="1" fill="#54b399"/><rect x="63" y="23.300" width="5" height="1.500" fill="#54b399"/><rect x="72" y="23.300" width="4" height="1.500" fill="#54b399"/><rect x="76" y="24" width="4" height=".8" fill="#54b399"/></svg>
<span class="abs" style="left:1260.60px;top:883.70px;font-size:12.6px;line-height:16px;color:#343741;letter-spacing:0.591px;">161917</span>
<span class="abs" style="left:1380.40px;top:883.70px;font-size:12.6px;line-height:16px;color:#343741;letter-spacing:0.606px;">2.23e-308</span>
<div class="badge" style="left:1500px;top:884px"></div>
<span class="abs" style="left:1509.20px;top:886.00px;font-size:12.5px;line-height:16px;color:#000;letter-spacing:0.197px;-webkit-text-stroke:.3px;">High</span>
<svg width="16" height="16" viewBox="0 0 16 16" style="left:1655.6px;top:893.0px"><circle cx="8" cy="8" r="7.300" fill="none" stroke="#4a4f5a" stroke-width=".9" stroke-dasharray="3.200 .8"/><path d="M11.500 5.400L8.700 8.900L4.500 10.600L7.300 7.100Z" fill="none" stroke="#4a4f5a" stroke-width=".8" stroke-linejoin="round"/></svg>
<div class="rowline" style="top:920px"></div>
<span class="abs" style="left:292.00px;top:924.70px;font-size:12.6px;line-height:16px;color:#343741;letter-spacing:0.082px;">kubernetes.node.labels.kubernetes_io/hostname</span>
<span class="abs" style="left:716.30px;top:924.70px;font-size:12.6px;line-height:16px;color:#343741;letter-spacing:0.486px;">gke-eden-3-staging-ssd-3-bc7684a4-2isy</span>
<svg width="80" height="26" viewBox="0 0 80 26" style="left:1140px;top:924.2px"><path d="M0 23.700V22.800L20 22.600L40 22.200L48.200 21.800V23.700Z" fill="#f5a70b"/><rect x="48.200" y=".8" width="3.900" height="23" fill="#f5a005"/><rect x="52.100" y="10.100" width="3.900" height="13.700" fill="#f8ad1c"/><rect x="0" y="23.400" width="56" height="1.450" fill="#4dab91"/><rect x="56" y="24.200" width="7" height=".6" fill="#54b399" opacity=".8"/><rect x="58.500" y="23.800" width="2.500" height="1" fill="#54b399"/><rect x="63" y="23.300" width="5" height="1.500" fill="#54b399"/><rect x="72" y="23.300" width="4" height="1.500" fill="#54b399"/><rect x="76" y="24" width="4" height=".8" fill="#54b399"/></svg>
<span class="abs" style="left:1260.60px;top:924.70px;font-size:12.6px;line-height:16px;color:#343741;letter-spacing:0.591px;">171321</span>
<span class="abs" style="left:1380.40px;top:924.70px;font-size:12.6px;line-height:16px;color:#343741;letter-spacing:0.606px;">2.23e-308</span>
<div class="badge" style="left:1500px;top:925px"></div>
<span class="abs" style="left:1509.20px;top:927.00px;font-size:12.5px;line-height:16px;color:#000;letter-spacing:0.197px;-webkit-text-stroke:.3px;">High</span>
<svg width="16" height="16" viewBox="0 0 16 16" style="left:1655.6px;top:934.0px"><circle cx="8" cy="8" r="7.300" fill="none" stroke="#4a4f5a" stroke-width=".9" stroke-dasharray="3.200 .8"/><path d="M11.500 5.400L8.700 8.900L4.500 10.600L7.300 7.100Z" fill="none" stroke="#4a4f5a" stroke-width=".8" stroke-linejoin="round"/></svg>
<div class="rowline" style="top:961px"></div>
<span class="abs" style="left:292.00px;top:965.70px;font-size:12.6px;line-height:16px;color:#343741;letter-spacing:0.092px;">kubernetes.replicaset.name</span>
<div class="hl" style="left:716px;top:967px;width:49.600px;height:12.800px;background:#ffff00"></div>
<span class="abs" style="left:716.30px;top:965.70px;font-size:12.6px;line-height:16px;color:#000;letter-spacing:0.096px;-webkit-text-stroke:.3px;">postgres</span>
<span class="abs" style="left:765.80px;top:965.70px;font-size:12.6px;line-height:16px;color:#343741;letter-spacing:0.779px;">-5dc4ff9cf7</span>
<svg width="80" height="26" viewBox="0 0 80 26" style="left:1140px;top:965.2px"><path d="M0 23.700V22.800L20 22.600L40 22.200L48.200 21.800V23.700Z" fill="#f5a70b"/><rect x="48.200" y=".8" width="3.900" height="23" fill="#f5a005"/><rect x="52.100" y="10.100" width="3.900" height="13.700" fill="#f8ad1c"/><rect x="0" y="23.400" width="56" height="1.450" fill="#4dab91"/><rect x="56" y="24.200" width="7" height=".6" fill="#54b399" opacity=".8"/><rect x="58.500" y="23.800" width="2.500" height="1" fill="#54b399"/><rect x="63" y="23.300" width="5" height="1.500" fill="#54b399"/><rect x="72" y="23.300" width="4" height="1.500" fill="#54b399"/><rect x="76" y="24" width="4" height=".8" fill="#54b399"/></svg>
<span class="abs" style="left:1260.60px;top:965.70px;font-size:12.6px;line-height:16px;color:#343741;letter-spacing:0.591px;">161917</span>
<span class="abs" style="left:1380.40px;top:965.70px;font-size:12.6px;line-height:16px;color:#343741;letter-spacing:0.606px;">2.23e-308</span>
<div class="badge" style="left:1500px;top:966px"></div>
<span class="abs" style="left:1509.20px;top:968.00px;font-size:12.5px;line-height:16px;color:#000;letter-spacing:0.197px;-webkit-text-stroke:.3px;">High</span>
<svg width="16" height="16" viewBox="0 0 16 16" style="left:1655.6px;top:975.0px"><circle cx="8" cy="8" r="7.300" fill="none" stroke="#4a4f5a" stroke-width=".9" stroke-dasharray="3.200 .8"/><path d="M11.500 5.400L8.700 8.900L4.500 10.600L7.300 7.100Z" fill="none" stroke="#4a4f5a" stroke-width=".8" stroke-linejoin="round"/></svg>
<div class="rowline" style="top:1002px"></div>
<span class="abs" style="left:296.20px;top:1026.50px;font-size:12.5px;line-height:16px;color:#343741;letter-spacing:-0.039px;-webkit-text-stroke:.3px;">Rows per page: 10</span>
<svg width="10" height="6" viewBox="0 0 10 6" style="left:410.200px;top:1032.300px"><path d="M1 1L5 4.800L9 1" fill="none" stroke="#343741" stroke-width="1.1" stroke-linecap="round" stroke-linejoin="round"/></svg>
<svg width="8" height="13" viewBox="0 0 8 13" style="left:1514.300px;top:1028.600px"><path d="M6.500 1L1.300 6.500L6.500 12" fill="none" stroke="#343741" stroke-width="1.15" stroke-linecap="round" stroke-linejoin="round"/></svg>
<svg width="8" height="13" viewBox="0 0 8 13" style="left:1659.600px;top:1028.600px"><path d="M1.500 1L6.700 6.500L1.500 12" fill="none" stroke="#343741" stroke-width="1.15" stroke-linecap="round" stroke-linejoin="round"/></svg>
<span class="abs" style="left:1536.90px;top:1025.00px;font-size:14.6px;line-height:20px;color:#343741;">1</span>
<span class="abs" style="left:1560.00px;top:1025.00px;font-size:14.6px;line-height:20px;color:#343741;">2</span>
<span class="abs" style="left:1610.50px;top:1025.00px;font-size:14.6px;line-height:20px;color:#343741;">4</span>
<span class="abs" style="left:1635.30px;top:1025.00px;font-size:14.6px;line-height:20px;color:#343741;">5</span>
<span class="abs" style="left:1585.30px;top:1025.00px;font-size:14.6px;line-height:20px;font-weight:700;color:#0061a6;text-decoration:underline;text-decoration-thickness:1.300px;text-underline-offset:2px;">3</span>
</div>
</body>
</html>
